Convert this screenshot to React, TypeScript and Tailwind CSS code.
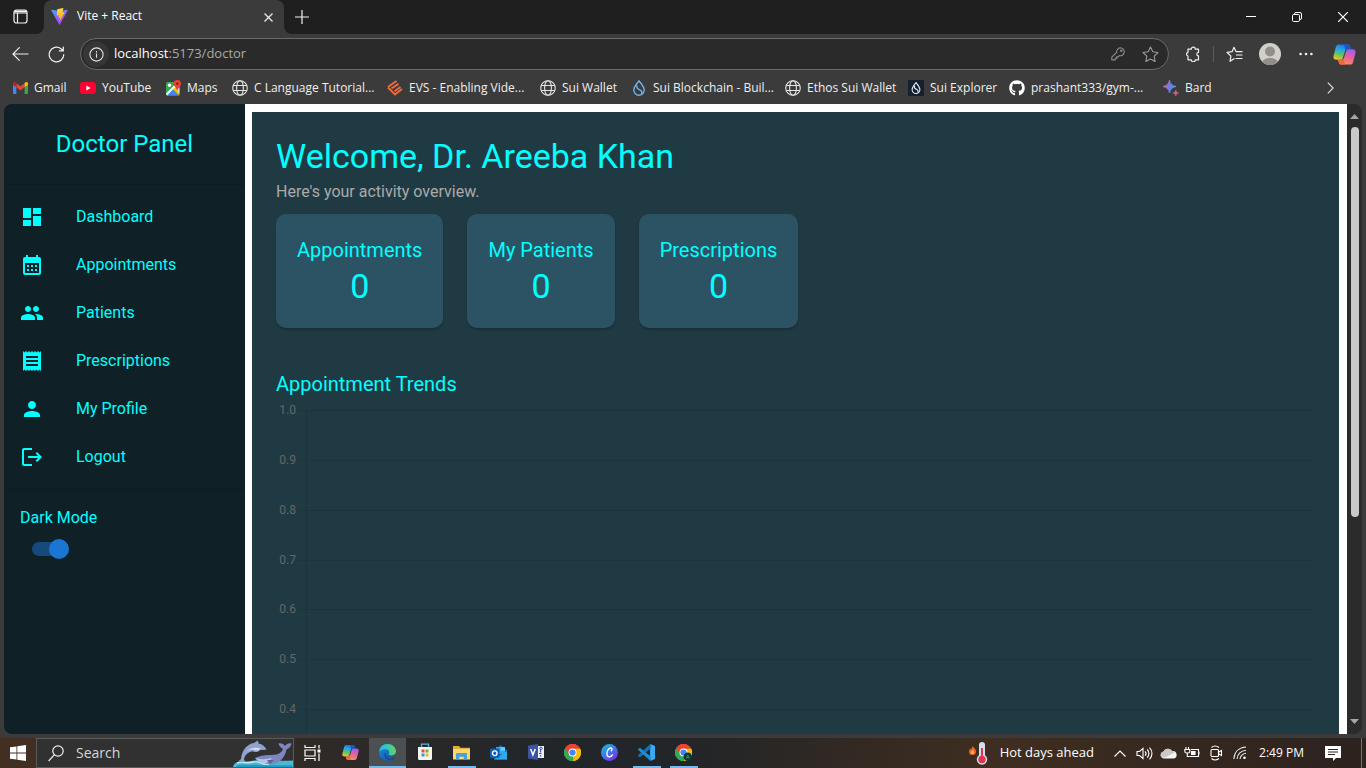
import React from "react";
import {
  MdCalendarMonth,
  MdDashboard,
  MdLogout,
  MdPeople,
  MdPerson,
  MdReceipt,
} from "react-icons/md";
import { FaGithub } from "react-icons/fa";

/* ---------- shared logos ---------- */

function CopilotLogo({ size, id }: { size: number; id: string }) {
  return (
    <svg width={size} height={size} viewBox="0 0 24 24" aria-hidden="true">
      <defs>
        <linearGradient id={id + "a"} x1="0.6" y1="0" x2="0.3" y2="1">
          <stop offset="0" stopColor="#1b6fe0" />
          <stop offset="0.35" stopColor="#25a8e8" />
          <stop offset="0.65" stopColor="#58c46a" />
          <stop offset="1" stopColor="#f3c321" />
        </linearGradient>
        <linearGradient id={id + "b"} x1="0.7" y1="0" x2="0.3" y2="1">
          <stop offset="0" stopColor="#a05cf0" />
          <stop offset="0.45" stopColor="#e5619f" />
          <stop offset="1" stopColor="#ff9152" />
        </linearGradient>
      </defs>
      <path d="M6 1.500h9.200c1.800 0 2.400 1 2.900 2.700l.6 2.100h-3.200c-1.700 0-2.600.9-3.100 2.600l-1.900 6.200c-.5 1.700-1.300 2.500-3 2.500H3.600C1 17.600 0 15.800.6 13.300L3 4.300c.5-1.800 1.300-2.800 3-2.800z" fill={`url(#${id}a)`} />
      <path d="M18 22.500H8.800c-1.800 0-2.400-1-2.900-2.700l-.6-2.100h3.200c1.700 0 2.600-.9 3.100-2.600l1.900-6.200c.5-1.700 1.300-2.500 3-2.500h3.900c2.600 0 3.600 1.800 3 4.300l-2.400 9c-.5 1.800-1.300 2.800-3 2.800z" fill={`url(#${id}b)`} />
      <path d="M11.500 1.500h3.700c1.800 0 2.400 1 2.900 2.700l.6 2.100h-3.200c-1.200 0-2 .5-2.500 1.300z" fill="#1a56c4" />
      <path d="M12.500 22.500H8.800c-1.800 0-2.400-1-2.900-2.700l-.6-2.100h3.200c1.200 0 2-.5 2.500-1.300z" fill="#f0693c" />
    </svg>
  );
}

function ChromeLogo({ badge }: { badge?: boolean }) {
  return (
    <svg width="17" height="17" viewBox="0 0 24 24" aria-hidden="true">
      <path d="M12 12 1.600 6A12 12 0 0 1 22.400 6z" fill="#ea4335" />
      <path d="M12 12 22.400 6A12 12 0 0 1 12 24z" fill="#fbbc05" />
      <path d="M12 12V24A12 12 0 0 1 1.600 6z" fill="#34a853" />
      <path d="M12 6.500h10.600a12 12 0 0 1-10.600 17.500l5-9z" fill="#fbbc05" />
      <path d="M1.600 6a12 12 0 0 1 20.800 0v.5H12L7 15z" fill="#ea4335" />
      <path d="M1.600 6 7 15l5 2.500 1 6.500A12 12 0 0 1 1.600 6z" fill="#34a853" />
      <path d="M17 15 12 24l-1-.1z" fill="#34a853" />
      <circle cx="12" cy="12" r="5.600" fill="#fff" />
      <circle cx="12" cy="12" r="4.400" fill="#4285f4" />
      {badge && (
        <g>
          <circle cx="18" cy="18" r="6" fill="#0b3a35" />
          <path d="M15.800 20.500 18 15.500l2.200 5M16.600 19h2.800" stroke="#4d9488" strokeWidth="1" fill="none" />
        </g>
      )}
    </svg>
  );
}

function GlobeIcon() {
  return (
    <svg width="16" height="16" viewBox="0 0 16 16" fill="none" stroke="#e4e4e4" strokeWidth="1.100" aria-hidden="true">
      <circle cx="8" cy="8" r="7.300" />
      <ellipse cx="8" cy="8" rx="3.400" ry="7.300" />
      <path d="M1.200 5.500h13.600M1.200 10.500h13.600" />
    </svg>
  );
}

function SuiDrop({ color, size }: { color: string; size: number }) {
  return (
    <svg width={size} height={size} viewBox="0 0 16 16" fill="none" stroke={color} strokeWidth="1.400" aria-hidden="true">
      <path d="M8 .8c2 2.700 5.200 5.800 5.200 9.300A5.200 5.200 0 0 1 8 15.300a5.200 5.200 0 0 1-5.200-5.200C2.800 6.600 6 3.500 8 .8z" />
      <path d="M6 5.200c-.8 3 .8 3.900 2.700 4.600 1.800.7 2.600 2.100 1.800 4.300" />
    </svg>
  );
}

function ViteLogo() {
  return (
    <svg width="17" height="17" viewBox="0 0 24 24" aria-hidden="true">
      <defs>
        <linearGradient id="viteBody" x1="0" y1="0" x2="0.6" y2="1">
          <stop offset="0" stopColor="#41a6ff" />
          <stop offset="1" stopColor="#bd34fe" />
        </linearGradient>
        <linearGradient id="viteBolt" x1="0" y1="0" x2="0" y2="1">
          <stop offset="0" stopColor="#ffdd35" />
          <stop offset="1" stopColor="#ffa800" />
        </linearGradient>
      </defs>
      <path d="M23.500 3.500 12.700 23.200c-.3.500-1 .5-1.200 0L.5 3.500c-.3-.5.200-1.100.8-1L12 4.400l10.700-1.900c.6-.1 1.100.5.800 1z" fill="url(#viteBody)" />
      <path d="m17 .1-8 1.600c-.2 0-.3.200-.3.300L8.200 10.300c0 .2.200.4.400.3l2.200-.5c.3-.1.500.2.400.4l-.6 3.200c0 .2.200.4.400.3l1.400-.4c.2-.1.500.2.400.4l-1.100 5c-.1.300.4.500.5.200L19 6.400c.1-.2-.1-.4-.3-.4l-2.300.5c-.2 0-.4-.2-.3-.4L17.400.6c.1-.3-.1-.5-.4-.5z" fill="url(#viteBolt)" />
    </svg>
  );
}

/* ---------- browser chrome ---------- */

function TabStrip() {
  return (
    <header className="flex h-[34px] shrink-0 bg-[#1f1f1f]">
      <div className="flex w-11 shrink-0 bg-[#3b3b3b]">
        <button aria-label="Tab actions" className="flex flex-1 items-center justify-center rounded-br-lg bg-[#1f1f1f] pr-1 pb-0.5">
          <svg width="15" height="15" viewBox="0 0 15 15" fill="none" stroke="#f2f2f2" strokeWidth="1.200">
            <rect x="1" y="1" width="13" height="13" rx="2.500" />
            <path d="M1 4h13M4.500 4.600V14" />
            <path d="M1.800 2.400h11.400" strokeWidth="1.800" />
          </svg>
        </button>
      </div>
      <div className="flex w-60 shrink-0 rounded-t-lg bg-[#3b3b3b] pr-2 pl-[7px]">
        <div className="flex flex-1 items-center gap-[9px] pb-0.5 text-xs text-white">
          <ViteLogo />
          <span>Vite + React</span>
        </div>
        <button aria-label="Close tab" className="flex w-4 items-center justify-center">
          <svg width="9" height="9" viewBox="0 0 9 9" stroke="#e8e8e8" strokeWidth="1.300">
            <path d="m.5.5 8 8m0-8-8 8" />
          </svg>
        </button>
      </div>
      <div className="flex flex-1 bg-[#3b3b3b]">
        <div className="flex flex-1 items-center rounded-bl-lg bg-[#1f1f1f]">
          <button aria-label="New tab" className="flex h-8 w-9 items-center justify-center">
            <svg width="14" height="14" viewBox="0 0 14 14" stroke="#f2f2f2" strokeWidth="1.200">
              <path d="M7 0v14M0 7h14" />
            </svg>
          </button>
          <div className="flex-1" />
          <button aria-label="Minimize" className="flex h-8 w-[46px] items-center justify-center">
            <svg width="10" height="10" viewBox="0 0 10 10" stroke="#fff"><path d="M0 4.500h10" /></svg>
          </button>
          <button aria-label="Restore" className="flex h-8 w-[46px] items-center justify-center">
            <svg width="10" height="10" viewBox="0 0 10 10" fill="none" stroke="#fff">
              <rect x=".5" y="2.500" width="7" height="7" rx="1.200" />
              <path d="M2.500 2.500V2A1.500 1.500 0 0 1 4 .5h4A1.500 1.500 0 0 1 9.500 2v4A1.500 1.500 0 0 1 8 7.500h-.5" />
            </svg>
          </button>
          <button aria-label="Close window" className="flex h-8 w-[46px] items-center justify-center">
            <svg width="10" height="10" viewBox="0 0 10 10" stroke="#fff" strokeWidth="1.200"><path d="m0 0 10 10M10 0 0 10" /></svg>
          </button>
        </div>
      </div>
    </header>
  );
}

function Toolbar() {
  return (
    <nav aria-label="Browser toolbar" className="flex h-10 shrink-0 items-center bg-[#3b3b3b]">
      <button aria-label="Back" className="flex w-10 items-center justify-center">
        <svg width="17" height="14" viewBox="0 0 17 14" fill="none" stroke="#f0f0f0" strokeWidth="1.200" strokeLinecap="round">
          <path d="M16 7H1m6.300-6.300L1 7l6.300 6.300" />
        </svg>
      </button>
      <button aria-label="Refresh" className="flex w-8 items-center justify-center">
        <svg width="17" height="17" viewBox="0 0 17 17" fill="none" stroke="#f0f0f0" strokeWidth="1.200" strokeLinecap="round" strokeLinejoin="round">
          <path d="M15.800 8.500A7.300 7.300 0 1 1 13 2.750L15 4.600M15.300 1v3.900h-3.900" />
        </svg>
      </button>
      <div className="ml-2 flex h-8 min-w-0 flex-1 items-center rounded-full border border-[#6a6a6a] bg-[#2a2a2a] pl-0.5">
        <button aria-label="Site information" className="flex h-[26px] w-[26px] items-center justify-center rounded-full bg-[#363636]">
          <svg width="15" height="15" viewBox="0 0 15 15" fill="none" stroke="#e4e4e4" strokeWidth="1.100">
            <circle cx="7.500" cy="7.500" r="6.600" />
            <path d="M7.500 6.600v4.200M7.500 4v1.400" />
          </svg>
        </button>
        <label className="relative flex min-w-0 flex-1 items-center pl-[5px] text-[13px]">
          <input
            aria-label="Address"
            defaultValue="localhost:5173/doctor"
            className="w-full bg-transparent text-transparent outline-none"
          />
          <span aria-hidden="true" className="pointer-events-none absolute left-[5px] text-[#a9a9a9]">
            <span className="text-white">localhost</span>:5173/doctor
          </span>
        </label>
        <button aria-label="Saved passwords" className="flex w-8 items-center justify-center">
          <svg width="14" height="14" viewBox="0 0 14 14" fill="none" stroke="#8c8c8c" strokeWidth="1.100" strokeLinejoin="round">
            <path d="M9.300.7a4 4 0 1 1-.9 7.900l-1.300 1.300H5.700v1.500H4.200v1.500H.8v-2.700l5-5A4 4 0 0 1 9.300.7z" />
            <circle cx="10.300" cy="3.800" r=".7" />
          </svg>
        </button>
        <button aria-label="Add to favorites" className="mr-0.5 flex w-8 items-center justify-center">
          <svg width="17" height="17" viewBox="0 0 17 17" fill="none" stroke="#9a9a9a" strokeWidth="1.100" strokeLinejoin="round">
            <path d="m8.500 1 2.300 4.800 5.200.7-3.800 3.700.9 5.300-4.600-2.500-4.600 2.500.9-5.300L1 6.500l5.200-.7z" />
          </svg>
        </button>
      </div>
      <button aria-label="Extensions" className="ml-1.5 flex w-9 items-center justify-center">
        <svg width="16" height="16" viewBox="0 0 16 16" fill="none" stroke="#f0f0f0" strokeWidth="1.200" strokeLinejoin="round">
          <path d="M3 3.200h3.300a2 2 0 0 1 4 0h3.200V6.500a1.700 1.700 0 0 0 0 3.400v3.900h-3.200a2 2 0 0 1-4 0H3V10a1.900 1.900 0 0 1 0-3.700z" />
        </svg>
      </button>
      <div className="mx-0.5 h-4 w-px bg-[#5c5c5c]" />
      <button aria-label="Favorites" className="flex w-9 items-center justify-center">
        <svg width="17" height="17" viewBox="0 0 17 17" fill="none" stroke="#f0f0f0" strokeWidth="1.200" strokeLinejoin="round">
          <path d="M8.500 12.500 4 15.300l.9-5.200L1 6.300l5.200-.7L8 1.300l2 4.300h6.500M10 9h6.500M9.500 12.500h7" />
        </svg>
      </button>
      <button aria-label="Profile" className="flex w-9 items-center justify-center">
        <svg width="22" height="22" viewBox="0 0 22 22">
          <defs><clipPath id="avatar"><circle cx="11" cy="11" r="11" /></clipPath></defs>
          <circle cx="11" cy="11" r="11" fill="#d2cfcb" />
          <g clipPath="url(#avatar)" fill="#918d89">
            <circle cx="11" cy="8.500" r="5" />
            <ellipse cx="11" cy="20" rx="8" ry="5" />
          </g>
        </svg>
      </button>
      <button aria-label="Settings and more" className="flex w-9 items-center justify-center">
        <svg width="14" height="4" viewBox="0 0 14 4" fill="#f0f0f0">
          <circle cx="1.600" cy="2" r="1.300" /><circle cx="7" cy="2" r="1.300" /><circle cx="12.400" cy="2" r="1.300" />
        </svg>
      </button>
      <button aria-label="Copilot" className="flex w-[42px] items-center justify-center pr-0.5">
        <CopilotLogo size={23} id="cpTop" />
      </button>
    </nav>
  );
}

const bookmarks: { label: string; width: string; icon: React.ReactNode }[] = [
  {
    label: "Gmail",
    width: "w-[68px]",
    icon: (
      <svg width="15" height="12" viewBox="0 0 15 12">
        <path d="M0 1.500 3.400 4v8H1a1 1 0 0 1-1-1z" fill="#4285f4" />
        <path d="M15 1.500 11.600 4v8H14a1 1 0 0 0 1-1z" fill="#34a853" />
        <path d="M3.400 1.200 7.500 4.300l4.100-3.100v4.100L7.500 8.400 3.400 5.300z" fill="#ea4335" />
        <path d="M0 1.700C0 .2 1.800-.5 3 .6l.4.600v4.100L0 3z" fill="#c5221f" />
        <path d="M15 1.700c0-1.500-1.800-2.200-3-1.100l-.4.600v4.100L15 3z" fill="#fbbc04" />
      </svg>
    ),
  },
  {
    label: "YouTube",
    width: "w-[85px]",
    icon: (
      <svg width="16" height="12" viewBox="0 0 16 12">
        <rect width="16" height="12" rx="3" fill="#ff0033" />
        <path d="m6.300 3.400 4.400 2.600-4.400 2.600z" fill="#fff" />
      </svg>
    ),
  },
  {
    label: "Maps",
    width: "w-[67px]",
    icon: (
      <svg width="15" height="16" viewBox="0 0 15 16">
        <rect y="2" width="13.500" height="13.500" rx="1.500" fill="#34a853" />
        <path d="M13.500 7.500v6.500l-5-4.500z" fill="#d7dbe0" />
        <path d="m0 13.500 9-9 2 2L2 15.500a2 2 0 0 1-2-2z" fill="#fff" />
        <path d="m1 15.500 6-6.300 5.800 6.300z" fill="#4285f4" />
        <path d="M7 9.300 12.800 15.300h.7L9.700 7z" fill="#fbbc04" />
        <circle cx="3.500" cy="5.200" r="1.700" fill="#fff" />
        <path d="M11.300 0a3.700 3.700 0 0 1 3.700 3.700c0 2.500-3 3.800-3.700 7-.7-3.200-3.700-4.500-3.700-7A3.700 3.700 0 0 1 11.300 0z" fill="#ea4335" />
        <circle cx="11.300" cy="3.700" r="1.300" fill="#8c1a14" />
      </svg>
    ),
  },
  { label: "C Language Tutorial...", width: "w-[155px]", icon: <GlobeIcon /> },
  {
    label: "EVS - Enabling Vide...",
    width: "w-[153px]",
    icon: (
      <svg width="16" height="16" viewBox="0 0 16 16" fill="none" stroke="#f0693a" strokeWidth="2">
        <path d="M1 7.500 8 14.500l7-5.500" />
        <path d="M1 7 9.500 1M4.500 8.500l7-4.700M7.500 11.300l6-4.300" />
      </svg>
    ),
  },
  { label: "Sui Wallet", width: "w-[91px]", icon: <GlobeIcon /> },
  { label: "Sui Blockchain - Buil...", width: "w-[154px]", icon: <SuiDrop color="#6fb5e8" size={16} /> },
  { label: "Ethos Sui Wallet", width: "w-[123px]", icon: <GlobeIcon /> },
  {
    label: "Sui Explorer",
    width: "w-[101px]",
    icon: (
      <span className="flex h-4 w-4 items-center justify-center bg-[#15202f]">
        <SuiDrop color="#e8eef5" size={12} />
      </span>
    ),
  },
  { label: "prashant333/gym-...", width: "w-[154px]", icon: <FaGithub size={16} color="#fff" /> },
  {
    label: "Bard",
    width: "w-[60px]",
    icon: (
      <svg width="16" height="16" viewBox="0 0 16 16">
        <defs>
          <linearGradient id="bard" x1="0" y1="0.3" x2="1" y2="0.6">
            <stop offset="0.1" stopColor="#d0668a" />
            <stop offset="0.55" stopColor="#6a7de8" />
            <stop offset="1" stopColor="#4aa0f0" />
          </linearGradient>
        </defs>
        <path d="M6.500 0c1 4 2.500 5.500 6.500 6.500-4 1-5.500 2.500-6.500 6.500C5.500 9 4 7.500 0 6.500 4 5.500 5.500 4 6.500 0z" fill="url(#bard)" stroke="url(#bard)" strokeWidth="0.800" />
        <path d="M12.800 10c.3 2 1 2.700 3 3-2 .3-2.700 1-3 3-.3-2-1-2.700-3-3 2-.3 2.700-1 3-3z" fill="#d0668a" stroke="#d0668a" strokeWidth="0.600" />
      </svg>
    ),
  },
];

function BookmarkBar() {
  return (
    <nav aria-label="Favorites bar" className="flex h-[30px] shrink-0 items-center bg-[#3b3b3b] pb-0.5 pl-3 text-xs text-[#f0f0f0]">
      {bookmarks.map((b) => (
        <a key={b.label} href="#" className={`flex shrink-0 items-center gap-1.5 whitespace-nowrap ${b.width}`}>
          <span className="flex w-4 shrink-0 justify-center">{b.icon}</span>
          <span>{b.label}</span>
        </a>
      ))}
      <button aria-label="More favorites" className="mr-5 ml-auto flex w-8 items-center justify-center">
        <svg width="7" height="12" viewBox="0 0 7 12" fill="none" stroke="#e0e0e0" strokeWidth="1.200">
          <path d="m.8.6 5.400 5.400L.8 11.400" />
        </svg>
      </button>
    </nav>
  );
}

/* ---------- doctor page ---------- */

const menu = [
  { label: "Dashboard", Icon: MdDashboard },
  { label: "Appointments", Icon: MdCalendarMonth },
  { label: "Patients", Icon: MdPeople },
  { label: "Prescriptions", Icon: MdReceipt },
  { label: "My Profile", Icon: MdPerson },
  { label: "Logout", Icon: MdLogout },
];

function Sidebar() {
  return (
    <aside className="w-[241px] shrink-0 bg-[#0f2027] text-[#00ffff]">
      <h2 className="flex h-20 items-center justify-center text-2xl">Doctor Panel</h2>
      <ul className="border-y border-[#0d1c23] py-2">
        {menu.map(({ label, Icon }) => (
          <li key={label}>
            <a href="#" className="flex h-12 items-center px-4">
              <span className="w-14">
                <Icon size={24} />
              </span>
              <span>{label}</span>
            </a>
          </li>
        ))}
      </ul>
      <div className="p-4">
        <label htmlFor="dark-mode" className="block leading-6">Dark Mode</label>
        <div className="flex h-[38px] items-center pl-3">
          <input
            id="dark-mode"
            type="checkbox"
            role="switch"
            defaultChecked
            className="relative h-[14px] w-[34px] appearance-none rounded-full bg-[#174a7c] after:absolute after:-top-[3px] after:left-[17px] after:h-5 after:w-5 after:rounded-full after:bg-[#1976d2]"
          />
        </div>
      </div>
    </aside>
  );
}

const stats = [
  { label: "Appointments", value: 0 },
  { label: "My Patients", value: 0 },
  { label: "Prescriptions", value: 0 },
];

const ticks = ["1.0", "0.9", "0.8", "0.7", "0.6", "0.5", "0.4"];

function TrendsChart() {
  return (
    <div className="grid h-[359px] grid-rows-7 pt-2.5 text-xs text-[#666666]">
      {ticks.map((t) => (
        <div key={t} className="flex">
          <span className="-mt-2 w-5 text-right leading-4">{t}</span>
          <span className="ml-0.5 w-2 border-t border-[#1d343d]" />
          <span className="flex-1 border-t border-l border-[#1d343d]" />
        </div>
      ))}
    </div>
  );
}

function Dashboard() {
  return (
    <main className="min-w-0 flex-1 overflow-hidden bg-white pt-2 pr-2 pl-[7px]">
      <div className="h-full overflow-hidden bg-[#203a43] px-6 pt-[23px] text-[#00ffff]">
        <h1 className="text-[34px] leading-[42px]">Welcome, Dr. Areeba Khan</h1>
        <p className="pt-[3px] leading-6 text-[#aaaaaa]">Here's your activity overview.</p>
        <section className="mt-2.5 flex gap-6">
          {stats.map((s) => (
            <article key={s.label} className="h-[114px] rounded-[10px] bg-[#2c5364] px-[21px] py-5 text-center shadow-[0_2px_2px_rgba(0,0,0,0.2)]">
              <h3 className="text-xl leading-8">{s.label}</h3>
              <p className="text-[34px] leading-10">{s.value}</p>
            </article>
          ))}
        </section>
        <section className="mt-10">
          <h2 className="text-xl leading-8">Appointment Trends</h2>
          <TrendsChart />
        </section>
      </div>
    </main>
  );
}

function ScrollRail() {
  return (
    <div className="flex w-[15px] shrink-0 flex-col items-center bg-[#2b2b2b] py-2.5">
      <svg width="9" height="5" viewBox="0 0 9 5" fill="#a5a5a5"><path d="M4.500 0 9 5H0z" /></svg>
      <div className="mt-2 h-[390px] w-2 rounded-full bg-[#c9c9c9]" />
      <svg className="mt-auto" width="9" height="5" viewBox="0 0 9 5" fill="#a5a5a5"><path d="M0 0h9L4.500 5z" /></svg>
    </div>
  );
}

/* ---------- taskbar ---------- */

const apps: { name: string; active?: boolean; open?: boolean; icon: React.ReactNode }[] = [
  { name: "Copilot", icon: <CopilotLogo size={17} id="cpTask" /> },
  {
    name: "Microsoft Edge",
    active: true,
    open: true,
    icon: (
      <svg width="17" height="17" viewBox="0 0 24 24">
        <defs>
          <linearGradient id="edgeTop" x1="0" y1="0.5" x2="1" y2="0.3">
            <stop offset="0" stopColor="#2bb5e8" /><stop offset="0.5" stopColor="#36c8b8" /><stop offset="1" stopColor="#6ad44f" />
          </linearGradient>
          <linearGradient id="edgeBase" x1="0" y1="0" x2="1" y2="1">
            <stop offset="0" stopColor="#1b8fe0" /><stop offset="1" stopColor="#0d4f9e" />
          </linearGradient>
        </defs>
        <circle cx="12" cy="12" r="12" fill="url(#edgeBase)" />
        <path d="M0 11.500C.5 5 5.500 0 12 0c7 0 12 5 12 10.500 0 3.700-3 6-6.500 6-3 0-4-1-4-2 0-.7 1-1 1-2.700 0-2.500-2.500-4.300-5.500-4.300-4.500 0-8 2-9 4z" fill="url(#edgeTop)" />
        <path d="M9.500 12c-1 3 .5 6.500 4 7.800 3 1 6.500.5 8.500-1.300l1 0-3.500 5.500-3-1.500c-4.500.5-9-3-9-7.500 0-1.200.8-2.400 2-3z" fill="#0f4f9c" />
        <path d="M13.500 14.500c0 1 1 2 4 2 2.500 0 4.700-1.200 5.800-3.100l.5 1.600-1.800 3.500c-2.500 1-6 .8-8-.8-1.200-1-1.300-2.200-.5-3.200z" fill="#4a5054" />
      </svg>
    ),
  },
  {
    name: "Microsoft Store",
    icon: (
      <svg width="16" height="18" viewBox="0 0 16 18">
        <path d="M4.500 4V1.200h7V4" fill="none" stroke="#5fb3e4" strokeWidth="1.300" />
        <path d="M1 4h14v11.500a1.500 1.500 0 0 1-1.500 1.500h-11A1.500 1.500 0 0 1 1 15.500z" fill="#f4f4f4" />
        <path d="M4.500 6.500h3v3h-3z" fill="#e8502a" /><path d="M8.500 6.500h3v3h-3z" fill="#74b52b" />
        <path d="M4.500 10.500h3v3h-3z" fill="#2a9fe0" /><path d="M8.500 10.500h3v3h-3z" fill="#f8b51c" />
      </svg>
    ),
  },
  {
    name: "File Explorer",
    open: true,
    icon: (
      <svg width="17" height="15" viewBox="0 0 17 15">
        <path d="M0 1h6l1.500 1.800H17V14H0z" fill="#e8a93a" />
        <path d="M0 4h17v10.500H0z" fill="#fbd86b" />
        <path d="M3 14.500V9.300C3 8.500 3.500 8 4.200 8h8.600c.7 0 1.200.5 1.200 1.300v5.200h-3.200v-2.700H6.200v2.700z" fill="#4a9fe0" />
      </svg>
    ),
  },
  {
    name: "Outlook",
    icon: (
      <svg width="17" height="15" viewBox="0 0 17 15">
        <path d="M4 5 10.500 0 17 5v9.500H4z" fill="#1364b0" />
        <path d="M6 2h9v7H6z" fill="#35a5e5" /><path d="M10.500 2H15v4h-4.500z" fill="#5cc8f5" />
        <path d="m4 14.500 13-8.500v8.500z" fill="#30a9ee" />
        <rect y="3.500" width="9.500" height="9.500" rx="1" fill="#0f5fb5" />
        <circle cx="4.750" cy="8.250" r="2.300" fill="none" stroke="#fff" strokeWidth="1.300" />
      </svg>
    ),
  },
  {
    name: "Visio",
    icon: (
      <svg width="16" height="16" viewBox="0 0 16 16">
        <path d="M8 2h8v12H8z" fill="#eef0f8" />
        <path d="M0 1.500 10 0v16L0 14.500z" fill="#3b55a3" />
        <path d="m2.700 5 2.200 6L7.300 5" fill="none" stroke="#fff" strokeWidth="1.500" />
        <path d="M11 9.500h2.500M12.500 5.500v3M12.500 11v1.500" stroke="#3b55a3" strokeWidth="1.200" />
        <circle cx="13" cy="4.300" r="1.200" fill="none" stroke="#3b55a3" />
      </svg>
    ),
  },
  { name: "Google Chrome", icon: <ChromeLogo /> },
  {
    name: "Canva",
    icon: (
      <svg width="17" height="17" viewBox="0 0 17 17">
        <defs>
          <linearGradient id="canva" x1="0" y1="0" x2="0.8" y2="1">
            <stop offset="0" stopColor="#12c4cc" /><stop offset="0.5" stopColor="#3f7be8" /><stop offset="1" stopColor="#7d2ae8" />
          </linearGradient>
        </defs>
        <circle cx="8.500" cy="8.500" r="8.500" fill="url(#canva)" />
        <path d="M10.300 6.700c.9-.8 1-2.600-.4-2.700-2-.1-4 2.800-4 5.500 0 2.200 1.100 3.300 2.400 3.300s2.400-.8 3.100-2" fill="none" stroke="#fff" strokeWidth="1.300" strokeLinecap="round" />
      </svg>
    ),
  },
  {
    name: "Visual Studio Code",
    open: true,
    icon: (
      <svg width="17" height="17" viewBox="0 0 24 24">
        <path d="M17.500 0 24 2.800v18.400L17.500 24 17 17.700V6.300z" fill="#3aa8f2" />
        <path d="M17.500 0 18 6.500 3.200 18.300c-.4.300-1 .3-1.300 0L.4 17c-.5-.4-.5-1.100 0-1.500z" fill="#1272b8" />
        <path d="M17.500 24 18 17.500 3.200 5.700c-.4-.3-1-.3-1.300 0L.4 7c-.5.400-.5 1.100 0 1.500z" fill="#1c8dd9" />
      </svg>
    ),
  },
  { name: "Google Chrome profile", open: true, icon: <ChromeLogo badge /> },
];

function SearchDolphins() {
  return (
    <svg width="60" height="28" viewBox="0 0 60 28" className="ml-auto shrink-0 self-end" aria-hidden="true">
      <path d="M0 28c1-4 4-6 9-5.500 8 .5 12-2 20-1.500 10 .6 20 1 31 .5V28z" fill="#49b9d6" />
      <path d="M4 24c6-2 10 1 16-1s10 3 16 3" fill="none" stroke="#b9ecf5" strokeWidth="1.500" />
      <path d="M3 28h56v-2c-18 1-38-1-54 0z" fill="#2798bf" />
      <path d="M8 20c1-9 6-15 13-16l4-2.500.5 3c4 .7 6 2.500 8 6-2 .6-4 .4-6 .2-2.500 3-6 2.500-8 1.500C15 13 12 16 11 20l1 3-4-1-3 .5z" fill="#8fa3d0" />
      <path d="M13 13c4-4 9-5 15-3.500-2.500 2.500-6 2-8.500 1-3 .2-4.500 1-6.500 2.500z" fill="#d5dcf0" />
      <path d="M22 19c4-2 9-3 14-3 8 0 12-1 14-6-2-1-4-3-4.500-5.500 3-.5 5 .5 6.500 2.500 1.500-2 3.500-3 6.500-2.500-.5 3-2.500 5-5 6C52 19 46 25 38 25c-7 0-12-2-16-6z" fill="#7d86be" />
      <path d="M22 19c5 1.500 11 1.500 17 0-2 3-4 4.500-6 5.300C28 24 24.500 22 22 19z" fill="#b9c2e2" />
      <path d="m34 21 3 4 4-4z" fill="#5a64a4" />
    </svg>
  );
}

function Tray() {
  const cell = "flex h-full w-6 items-center justify-center";
  return (
    <>
      <button aria-label="Show hidden icons" className={cell}>
        <svg width="12" height="7" viewBox="0 0 12 7" fill="none" stroke="#fff" strokeWidth="1.200"><path d="m.5 6.500 5.500-5.500 5.500 5.500" /></svg>
      </button>
      <button aria-label="Volume" className={cell}>
        <svg width="17" height="13" viewBox="0 0 17 13" fill="none" stroke="#fff" strokeWidth="1.100">
          <path d="M1 4.500h2.500l3.500-3v10l-3.500-3H1zM9 4.300c1.200 1.200 1.200 3.200 0 4.400M11.200 2.500c2.300 2.300 2.300 5.700 0 8M13.500.7c3.300 3.300 3.300 8.300 0 11.600" />
        </svg>
      </button>
      <button aria-label="OneDrive" className={cell}>
        <svg width="17" height="11" viewBox="0 0 17 11">
          <path d="M4 10.500A3.600 3.600 0 0 1 3.500 3.500 4.800 4.800 0 0 1 12 3a3.800 3.800 0 0 1 1.500 7.500z" fill="#f3f3f3" />
          <path d="M3.500 3.500A4.800 4.800 0 0 1 12 3c1 .2 2 .7 2.500 1.500L5 9.500 1 8.800A3.500 3.500 0 0 1 3.500 3.500z" fill="#c9c9c9" />
        </svg>
      </button>
      <button aria-label="Battery" className={cell}>
        <svg width="16" height="12" viewBox="0 0 16 12" fill="none" stroke="#fff" strokeWidth="1.100">
          <path d="M7 2.500h7.500v7H5.500M15 4.500v3M2 0v2.500M4.500 0v2.500M.8 2.500h5v1.700c0 1-.9 1.800-1.900 1.800H2.700c-1 0-1.900-.8-1.900-1.800zM3.300 6v3.500h2" />
          <path d="M7.500 4.500h3.500v3H7.500z" fill="#fff" />
        </svg>
      </button>
      <button aria-label="Camera in use" className={cell}>
        <svg width="13" height="16" viewBox="0 0 13 16" fill="none" stroke="#fff" strokeWidth="1.100">
          <rect x="1" y="4.500" width="7.500" height="7" rx="1" />
          <path d="m8.500 7.300 3-1.800v5l-3-1.800M1.500 2.500c2-1.800 5-1.800 7.500 0M1.500 13.500c2 1.800 5 1.800 7.500 0" />
        </svg>
      </button>
      <button aria-label="Network" className={cell}>
        <svg width="14" height="14" viewBox="0 0 14 14" fill="none" stroke="#e8e8e8" strokeWidth="1.100">
          <path d="M.8 13C1.500 6 6 1.300 13 1M4 13c.7-5 4-8.200 9-8.700M7 13c.5-3 2.700-5.200 6-5.700" />
          <circle cx="11.500" cy="11.700" r="1.300" fill="#fff" stroke="none" />
        </svg>
      </button>
    </>
  );
}

function Taskbar() {
  return (
    <footer className="flex h-[30px] shrink-0 items-stretch bg-linear-to-r from-[#432f22] via-[#21262a] via-40% to-[#2c221e] text-white">
      <button aria-label="Start" className="flex w-9 shrink-0 items-center justify-center">
        <svg width="16" height="16" viewBox="0 0 16 16" fill="#fff">
          <path d="M0 2.300 6.500 1.400v6.200H0zM7.300 1.300 16 0v7.600H7.300zM0 8.400h6.500v6.200L0 13.700zM7.300 8.400H16V16l-8.700-1.300z" />
        </svg>
      </button>
      <label className="flex w-[258px] shrink-0 items-center border border-[#5a5a5a] bg-[#313131] pl-[11px]">
        <svg width="16" height="17" viewBox="0 0 16 17" fill="none" stroke="#f0f0f0" strokeWidth="1.200" className="shrink-0">
          <circle cx="10" cy="6" r="5.200" /><path d="M6.300 9.800.6 16" />
        </svg>
        <input aria-label="Search" placeholder="Search" className="ml-3 w-24 bg-transparent text-sm outline-none placeholder:text-[#d6d6d6]" />
        <SearchDolphins />
      </label>
      <button aria-label="Task view" className="flex w-[38px] shrink-0 items-center justify-center pr-0.5">
        <svg width="17" height="16" viewBox="0 0 17 16" fill="none" stroke="#fff" strokeWidth="1.200">
          <path d="M1 0v2.500h10V0M1 16v-2.500h10V16M1 5h10v6H1zM15 0v3.500M15 8.500V16" />
          <path d="M13.500 4.500h3v3h-3z" fill="#fff" stroke="none" />
        </svg>
      </button>
      {apps.map((a) => (
        <button
          key={a.name}
          aria-label={a.name}
          className={`flex w-[37px] shrink-0 flex-col items-center ${a.active ? "bg-[#4b5053]" : ""}`}
        >
          <span className="flex flex-1 items-center justify-center">{a.icon}</span>
          <span className={`h-0.5 ${a.active ? "w-full" : "w-7"} ${a.open ? "bg-[#76b9ed]" : ""}`} />
        </button>
      ))}
      <div className="flex flex-1 items-center justify-end bg-linear-to-r from-transparent via-[#3f2e20] via-45% to-[#2c221e]">
        <button className="mr-3.5 flex items-center gap-3 text-[13px] whitespace-nowrap">
          <svg width="19" height="23" viewBox="0 0 19 23" aria-hidden="true">
            <path d="M3.500 4c.5 1.500 3.500 2.500 3.500 5.500A3.500 3.500 0 0 1 0 9.500c0-1.500.8-2 1-3 .5.400.8.800 1 1.200C2.500 6.500 3.300 5.500 3.500 4z" fill="#f0642c" />
            <path d="M3.600 8c.8.800 1.700 1.300 1.700 2.400a1.700 1.700 0 0 1-3.400 0C1.900 9.300 3 9 3.600 8z" fill="#ffb04a" />
            <path d="M13 0a3 3 0 0 1 3 3v10.200a5.200 5.200 0 1 1-6 0V3a3 3 0 0 1 3-3z" fill="#cfe0f5" />
            <circle cx="13" cy="17.500" r="3.700" fill="#e0344e" />
            <path d="M12 6h2v10h-2z" fill="#e0344e" />
          </svg>
          <span>Hot days ahead</span>
        </button>
        <Tray />
        <time className="w-[59px] text-center text-xs whitespace-nowrap">2:49 PM</time>
        <button aria-label="Notifications" className="flex w-11 items-center justify-center">
          <svg width="16" height="15" viewBox="0 0 16 15">
            <path d="M0 0h16v12h-5l-3 3v-3H0z" fill="#fff" />
            <path d="M3 3.500h10M3 6h10M3 8.500h7" stroke="#2c221e" />
          </svg>
        </button>
        <span className="mr-1 ml-1.5 h-full w-px bg-[#7a706a]" />
      </div>
    </footer>
  );
}

export default function App() {
  return (
    <div className="flex h-screen flex-col overflow-hidden bg-[#3b3b3b] font-['Open_Sans',sans-serif]">
      <TabStrip />
      <Toolbar />
      <BookmarkBar />
      <div className="mx-1 mb-1 flex min-h-0 flex-1 overflow-hidden rounded-lg font-[Roboto,sans-serif]">
        <Sidebar />
        <Dashboard />
        <ScrollRail />
      </div>
      <Taskbar />
    </div>
  );
}
